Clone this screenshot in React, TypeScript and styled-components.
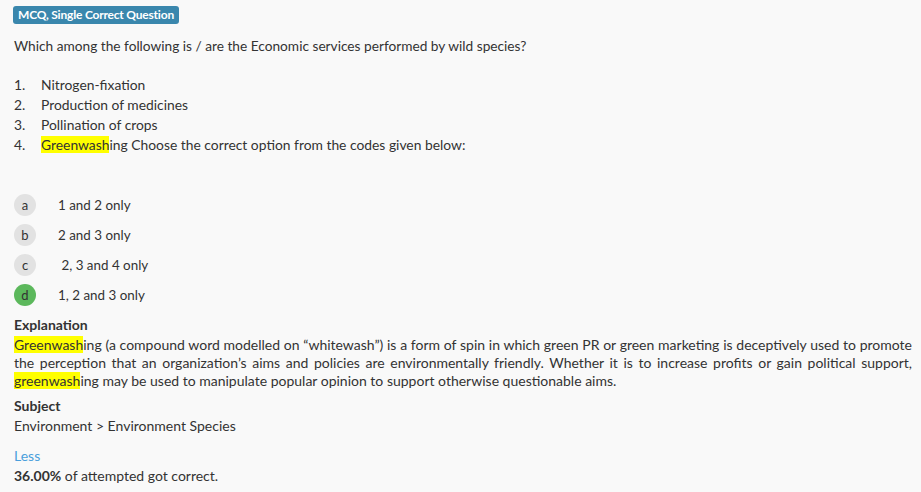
import React from "react";
import styled, { createGlobalStyle } from "styled-components";

const Global = createGlobalStyle`
  html, body { margin: 0; padding: 0; background: #f9f9f9; }
  body { font-family: Lato, "Open Sans", sans-serif; color: #333; font-size: 14px; }
`;

const Page = styled.div`
  padding: 5px 9px 0 14px;
`;

const Badge = styled.span`
  display: inline-block;
  margin-left: -1px;
  background: #3a87ad;
  color: #fff;
  font-weight: 700;
  font-size: 12px;
  line-height: 18px;
  padding: 0 5px;
  border-radius: 3px;
  letter-spacing: -0.2px;
`;

const Question = styled.p`
  margin: 12px 0 0;
  line-height: 20px;
  font-size: 13.7px;
`;

const List = styled.ol`
  margin: 19px 0 0;
  padding: 0;
  list-style: none;
  font-size: 13.85px;
`;

const Item = styled.li`
  display: flex;
  line-height: 20px;
`;

const Num = styled.span`
  width: 27px;
  flex: none;
`;

const Mark = styled.mark`
  background: #ffff00;
  color: inherit;
`;

const Options = styled.div`
  margin-top: 39px;
  display: flex;
  flex-direction: column;
  gap: 8px;
  font-size: 13.4px;
`;

const Option = styled.div`
  display: flex;
  align-items: center;
  height: 22px;
`;

const Circle = styled.span<{ $correct?: boolean }>`
  width: 22px;
  height: 22px;
  border-radius: 50%;
  background: ${(p) => (p.$correct ? "#5cb85c" : "#e2e2e2")};
  color: #333;
  font-size: 13px;
  display: flex;
  align-items: center;
  justify-content: center;
  flex: none;
`;

const OptionText = styled.span`
  margin-left: 22px;
  white-space: pre;
`;

const Heading = styled.div`
  font-weight: 700;
  line-height: 20px;
`;

const Section = styled.div<{ $mt: number }>`
  margin-top: ${(p) => p.$mt}px;
`;

const Para = styled.p`
  margin: 0;
  padding-top: 1px;
  line-height: 18px;
  text-align: justify;
`;

const Line = styled.div`
  line-height: 20px;
`;

const LessLink = styled.a`
  color: #4a9fdc;
  line-height: 20px;
  display: block;
  text-decoration: none;
  cursor: pointer;
`;

const options = [
  { l: "a", t: "1 and 2 only" },
  { l: "b", t: "2 and 3 only" },
  { l: "c", t: " 2, 3 and 4 only" },
  { l: "d", t: "1, 2 and 3 only", c: true },
];

export default function App() {
  return (
    <Page>
      <Global />
      <Badge>MCQ, Single Correct Question</Badge>
      <Question>Which among the following is / are the Economic services performed by wild species?</Question>
      <List>
        <Item><Num>1.</Num>Nitrogen-fixation</Item>
        <Item><Num>2.</Num>Production of medicines</Item>
        <Item><Num>3.</Num>Pollination of crops</Item>
        <Item>
          <Num>4.</Num>
          <span><Mark>Greenwash</Mark>ing Choose the correct option from the codes given below:</span>
        </Item>
      </List>
      <Options>
        {options.map((o) => (
          <Option key={o.l}>
            <Circle $correct={o.c}>{o.l}</Circle>
            <OptionText>{o.t}</OptionText>
          </Option>
        ))}
      </Options>
      <Section $mt={9}>
        <Heading>Explanation</Heading>
        <Para>
          <Mark>Greenwash</Mark>ing (a compound word modelled on “whitewash”) is a form of spin in which green PR or green marketing is deceptively used to promote the perception that an organization’s aims and policies are environmentally friendly. Whether it is to increase profits or gain political support, <Mark>greenwash</Mark>ing may be used to manipulate popular opinion to support otherwise questionable aims.
        </Para>
      </Section>
      <Section $mt={6}>
        <Heading>Subject</Heading>
        <Line>Environment &gt; Environment Species</Line>
      </Section>
      <Section $mt={10}>
        <LessLink>Less</LessLink>
        <Line><b>36.00%</b> of attempted got correct.</Line>
      </Section>
    </Page>
  );
}
